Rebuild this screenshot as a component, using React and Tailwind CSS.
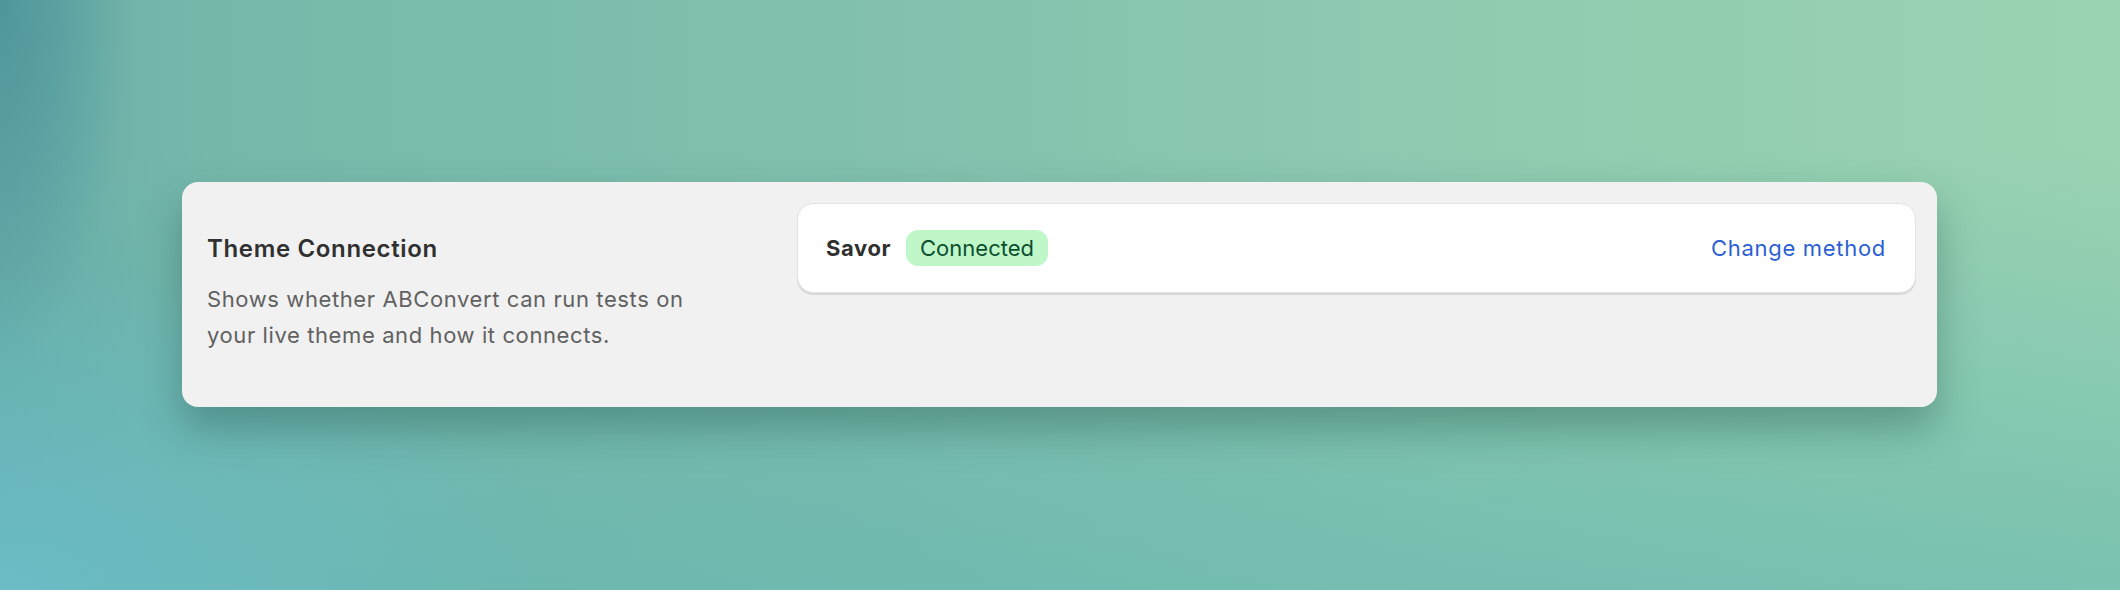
export default function App() {
  return (
    <div
      className="min-h-[590px] w-full overflow-hidden pt-[182px] pl-[182px] pr-[183px] bg-[radial-gradient(130px_360px_at_0%_0%,#4f969c_0%,rgba(79,150,156,0)_100%),radial-gradient(560px_330px_at_0%_100%,#6bbcc5_0%,rgba(107,188,197,0)_100%),linear-gradient(to_bottom,rgba(95,179,176,0)_25%,rgba(95,179,176,0.55)_100%),linear-gradient(to_right,#68aca8_0%,#77b8aa_10%,#82c0ae_40%,#90cbb0_70%,#9ad3b1_100%)]"
      style={{ fontFamily: 'Inter, "Noto Sans", sans-serif' }}
    >
      {/* Settings card */}
      <div className="flex gap-[20px] rounded-[16px] bg-[#f1f1f1] p-[21px] shadow-[0_22px_40px_rgba(25,70,60,0.35)]">
        {/* Description column */}
        <div className="w-[574px] shrink-0 pl-[4px] pt-[30px] pb-[33px]">
          <h2 className="text-[24px] font-semibold leading-[32px] tracking-[0.65px] text-[#303030]">Theme Connection</h2>
          <p className="mt-[16px] w-[500px] text-[22px] leading-[36px] tracking-[0.6px] text-[#616161]">
            Shows whether ABConvert can run tests on your live theme and how it connects.
          </p>
        </div>

        {/* Status card */}
        <div className="flex h-[90px] flex-1 items-center justify-between self-start rounded-[16px] border border-[#e3e3e3] bg-white pl-[28px] pr-[29px] shadow-[0_2px_0_rgba(0,0,0,0.1)]">
          <div className="flex items-center gap-[15px]">
            <span className="text-[22px] font-bold tracking-[0.6px] text-[#303030]">Savor</span>
            <span className="flex h-[36px] items-center rounded-[12px] bg-[#bff7c9] px-[14px] text-[22px] text-[#0c4f2f]">
              Connected
            </span>
          </div>
          <a href="#" className="text-[22px] tracking-[0.7px] text-[#2c5fd3]">
            Change method
          </a>
        </div>
      </div>
    </div>
  );
}
